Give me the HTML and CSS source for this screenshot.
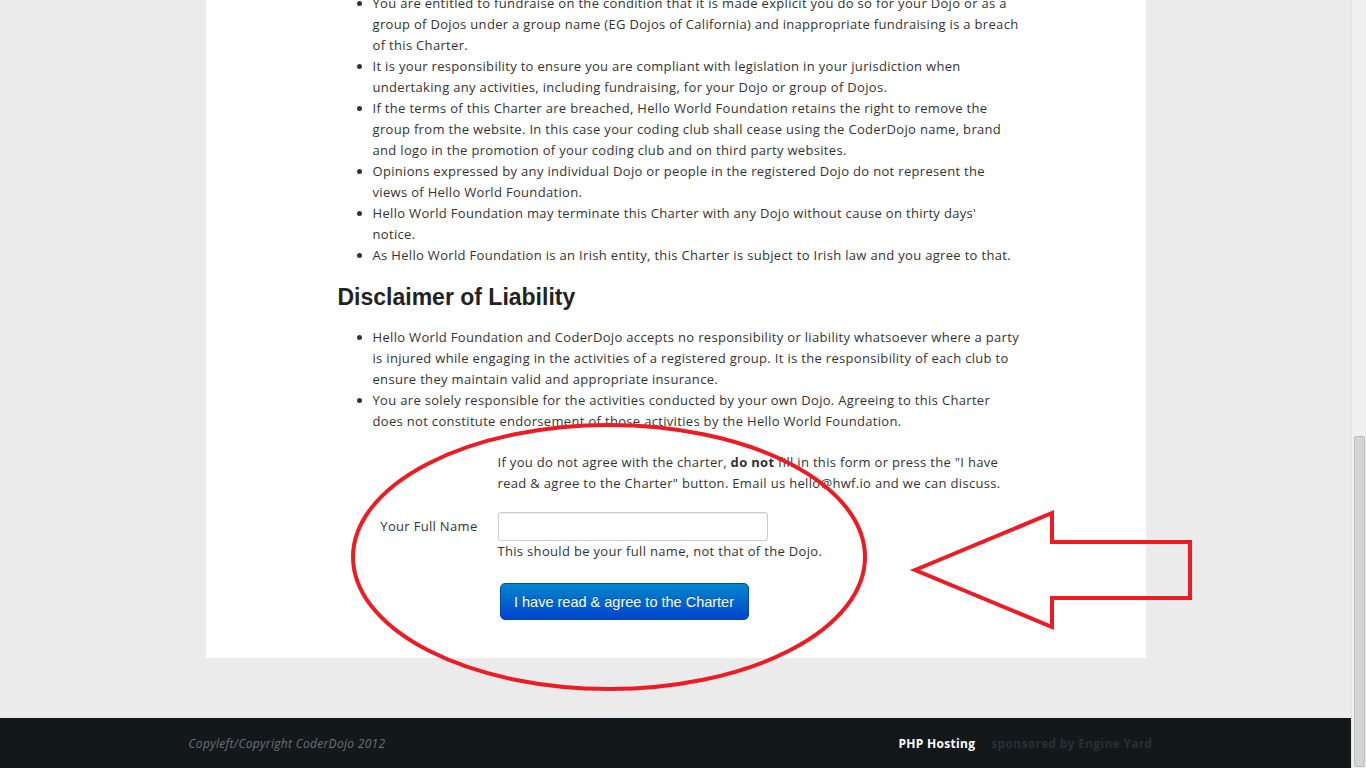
FILE: index.html
```html
<!DOCTYPE html>
<html lang="en">
<head>
<meta charset="utf-8">
<title>CoderDojo Charter</title>
<link rel="stylesheet" href="styles.css">
</head>
<body>
<div class="screen">
  <div class="main">
    <div class="panel">
      <div class="content">
        <ul class="terms">
          <li>You are entitled to fundraise on the condition that it is made explicit you do so for your Dojo or as a group of Dojos under a group name (EG Dojos of California) and inappropriate fundraising is a breach of this Charter.</li>
          <li>It is your responsibility to ensure you are compliant with legislation in your jurisdiction when undertaking any activities, including fundraising, for your Dojo or group of Dojos.</li>
          <li>If the terms of this Charter are breached, Hello World Foundation retains the right to remove the group from the website. In this case your coding club shall cease using the CoderDojo name, brand and logo in the promotion of your coding club and on third party websites.</li>
          <li>Opinions expressed by any individual Dojo or people in the registered Dojo do not represent the views of Hello World Foundation.</li>
          <li>Hello World Foundation may terminate this Charter with any Dojo without cause on thirty days' notice.</li>
          <li>As Hello World Foundation is an Irish entity, this Charter is subject to Irish law and you agree to that.</li>
        </ul>
        <h2 class="section-title">Disclaimer of Liability</h2>
        <ul class="terms">
          <li>Hello World Foundation and CoderDojo accepts no responsibility or liability whatsoever where a party is injured while engaging in the activities of a registered group. It is the responsibility of each club to ensure they maintain valid and appropriate insurance.</li>
          <li>You are solely responsible for the activities conducted by your own Dojo. Agreeing to this Charter does not constitute endorsement of those activities by the Hello World Foundation.</li>
        </ul>
        <form class="charter-form">
          <p class="notice">If you do not agree with the charter, <b>do not</b> fill in this form or press the "I have read &amp; agree to the Charter" button. Email us hello@hwf.io and we can discuss.</p>
          <div class="control-group">
            <label class="control-label" for="fullname">Your Full Name</label>
            <div class="controls">
              <input class="text-input" type="text" id="fullname">
              <p class="help">This should be your full name, not that of the Dojo.</p>
            </div>
          </div>
          <div class="actions">
            <button type="button" class="btn-primary">I have read &amp; agree to the Charter</button>
          </div>
        </form>
      </div>
    </div>
    <div class="footer">
      <div class="footer-inner">
        <span class="copyright">Copyleft/Copyright CoderDojo 2012</span>
        <span class="sponsor"><b class="sponsor-link">PHP Hosting</b><span class="sponsor-by">sponsored by Engine Yard</span></span>
      </div>
    </div>
  </div>
  <div class="scrollbar"><div class="thumb"></div></div>
</div>
<svg class="annotation" width="1366" height="768" viewBox="0 0 1366 768">
  <ellipse cx="609" cy="557" rx="256" ry="132" fill="none" stroke="#ed1c24" stroke-width="4"/>
  <polygon points="915,570 1052,513 1052,542 1190,542 1190,598 1052,598 1052,627" fill="none" stroke="#ed1c24" stroke-width="4" stroke-linejoin="miter"/>
</svg>
</body>
</html>
```

FILE: styles.css
```css
html, body {
  margin: 0;
  padding: 0;
  height: 100%;
  overflow: hidden;
}
body {
  font-family: "Open Sans", "Noto Sans", sans-serif;
  font-size: 13px;
  line-height: 21px;
  letter-spacing: 0.32px;
  color: #333;
  position: relative;
}
.screen {
  display: flex;
  height: 768px;
}
.main {
  flex: 0 0 1351px;
  display: flex;
  flex-direction: column;
  justify-content: flex-end;
  overflow: hidden;
  background: #ebebeb;
}
.panel {
  width: 940px;
  margin: 0 auto;
  background: #fff;
  padding: 40px 0 38px 0;
}
.content {
  margin-left: 132px;
  width: 684px;
}
.terms {
  margin: 0;
  padding-left: 35px;
}
.section-title {
  font-family: "Liberation Sans", Arial, sans-serif;
  font-size: 23px;
  line-height: 30px;
  font-weight: bold;
  letter-spacing: 0;
  color: #222;
  margin: 16px 0 15px;
}
.charter-form {
  margin: 20px 0 0;
}
.notice {
  margin: 0 0 0 160px;
}
.control-group {
  display: flex;
  margin-top: 18px;
}
.control-label {
  width: 140px;
  text-align: right;
  padding-top: 4px;
  margin-right: 20px;
}
.controls {
  flex: 1;
}
.text-input {
  display: block;
  box-sizing: border-box;
  width: 270px;
  height: 29px;
  margin: 0;
  border: 1px solid #ccc;
  border-radius: 3px;
  box-shadow: inset 0 1px 1px rgba(0,0,0,0.075);
  background: #fff;
}
.help {
  margin: 0;
}
.actions {
  margin: 21px 0 0 162px;
}
.btn-primary {
  display: block;
  width: 249px;
  height: 37px;
  padding: 0;
  border: 1px solid #0045b5;
  border-radius: 5px;
  background: linear-gradient(#0088cc, #0044cc);
  color: #fff;
  font-family: "Liberation Sans", Arial, sans-serif;
  font-size: 14.5px;
  letter-spacing: 0;
  text-shadow: 0 -1px 0 rgba(0,0,0,0.25);
}
.footer {
  margin-top: 60px;
  height: 50px;
  flex: 0 0 50px;
  background: #13181b;
}
.footer-inner {
  width: 970px;
  margin: 0 auto;
  display: flex;
  justify-content: space-between;
  align-items: center;
  height: 50px;
  font-size: 12px;
  letter-spacing: 0.3px;
}
.copyright {
  font-style: italic;
  color: #6e7275;
  margin-left: -2px;
}
.sponsor {
  margin-right: 8px;
}
.sponsor-link {
  color: #fff;
  margin-right: 16px;
}
.sponsor-by {
  color: #2b3134;
  font-weight: bold;
}
.scrollbar {
  flex: 1;
  background: #f0f0f0;
  border-left: 1px solid #e3e3e3;
  position: relative;
}
.thumb {
  position: absolute;
  left: 2px;
  right: 1px;
  top: 436px;
  bottom: 1px;
  background: #d4d4d4;
  border: 1px solid #bcbcbc;
  border-radius: 2px;
}
.annotation {
  position: absolute;
  left: 0;
  top: 0;
  pointer-events: none;
}
```
